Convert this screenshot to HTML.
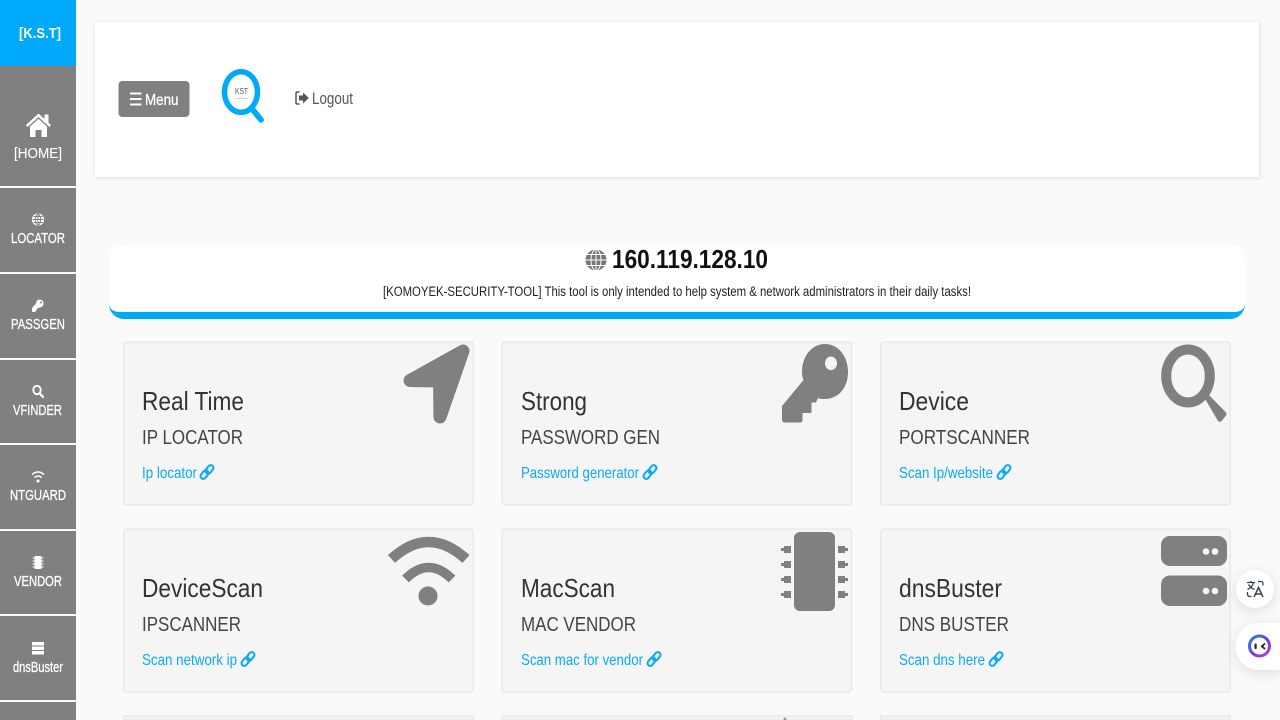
<!DOCTYPE html>
<html lang="en">
<head>
<meta charset="utf-8">
<title>[K.S.T]</title>
<style>
html,body{margin:0;padding:0;width:1280px;height:720px;overflow:hidden;background:#fafafa}
svg{display:block;position:absolute;left:0;top:0;filter:blur(.3px)}
text{font-family:"Liberation Sans",sans-serif}
.s{fill:#fff;font-size:15px;text-anchor:start;stroke:#fff;stroke-width:.3px}
.t{fill:#333;font-size:26px}
.u{fill:#444;font-size:20px}
.l{fill:#0aaaf8;font-size:16px}
.card{fill:#f5f5f5;stroke:#e9e9e9;stroke-width:1.5}
</style>
</head>
<body>
<svg width="1280" height="720" viewBox="0 0 1280 720" xmlns="http://www.w3.org/2000/svg">
<defs>
<filter id="sh" x="-5%" y="-20%" width="110%" height="140%"><feDropShadow dx="1" dy="1" stdDeviation="2" flood-color="#000" flood-opacity=".12"/></filter>
<filter id="sh2" x="-40%" y="-40%" width="180%" height="180%"><feDropShadow dx="0" dy="3" stdDeviation="6" flood-color="#000" flood-opacity=".12"/></filter>
<linearGradient id="rg" x1="0" y1="0" x2="1" y2="1"><stop offset="0" stop-color="#2b7bf0"/><stop offset=".55" stop-color="#6a3ce6"/><stop offset="1" stop-color="#c93ccf"/></linearGradient>
<symbol id="lnk" viewBox="0 0 14 16" overflow="visible">
<g fill="none" stroke="#0aaaf8" stroke-width="2.100">
<rect x="6.800" y="0.700" width="5.400" height="9.400" rx="2.700" transform="rotate(38 9.500 5.400)"/>
<rect x="1.800" y="5.900" width="5.400" height="9.400" rx="2.700" transform="rotate(38 4.500 10.600)"/>
</g>
</symbol>
</defs>

<rect width="1280" height="720" fill="#fafafa"/>

<!-- sidebar -->
<rect x="0" y="66" width="76" height="120" fill="#808080"/>
<rect x="0" y="0" width="76" height="66" fill="#00a9f9"/>
<rect x="0" y="188" width="76" height="84" fill="#808080"/>
<rect x="0" y="274" width="76" height="84" fill="#808080"/>
<rect x="0" y="360" width="76" height="83" fill="#808080"/>
<rect x="0" y="445" width="76" height="84" fill="#808080"/>
<rect x="0" y="531" width="76" height="83" fill="#808080"/>
<rect x="0" y="616" width="76" height="84" fill="#808080"/>
<rect x="0" y="702" width="76" height="18" fill="#808080"/>

<text x="19" y="38" fill="#fff" font-size="15" font-weight="bold" textLength="42" lengthAdjust="spacingAndGlyphs">[K.S.T]</text>

<!-- home icon -->
<path d="M26 125 38.500 113.500 44.500 119V114.500H48.500V122.800L51 125 49.500 127 38.500 117 27.500 127Z" fill="#fff"/>
<path d="M30 126.500 38.500 118.800 47 126.500V137H41.500V130H35.500V137H30Z" fill="#fff"/>
<text class="s" x="14" y="158" style="stroke-width:.1px" textLength="48" lengthAdjust="spacingAndGlyphs">[HOME]</text>

<!-- globe -->
<g fill="none" stroke="#fff" stroke-width="1.200"><circle cx="38" cy="219.500" r="5.500" fill="#fff"/><path stroke="#808080" stroke-width=".9" d="M32.500 219.500H43.500M33.500 216.500H42.500M33.500 222.500H42.500M38 214V225"/><ellipse cx="38" cy="219.500" rx="2.600" ry="5.500" stroke="#808080" stroke-width=".9"/></g>
<text class="s" x="11" y="243" font-size="14" textLength="54" lengthAdjust="spacingAndGlyphs">LOCATOR</text>

<!-- key -->
<path d="M32 311V308L36 303.500C36 301 38 299.500 40 299.500 42.200 299.500 43.500 301.500 43.500 303.500 43.500 306 41.500 307.500 39.500 307.500L37 308.500V310L35.500 310.500V312H32.500Z" fill="#fff"/>
<circle cx="41" cy="302.500" r="1" fill="#808080"/>
<text class="s" x="11" y="329" font-size="14" textLength="54" lengthAdjust="spacingAndGlyphs">PASSGEN</text>

<!-- search -->
<ellipse cx="37" cy="390" rx="3.700" ry="4.200" fill="none" stroke="#fff" stroke-width="1.900"/>
<path d="M39.800 393.500 43 397" stroke="#fff" stroke-width="2.200" stroke-linecap="round"/>
<text class="s" x="13" y="415" font-size="14" textLength="49" lengthAdjust="spacingAndGlyphs">VFINDER</text>

<!-- wifi -->
<path d="M32 474.500Q38 469.500 44 474.500M34.500 477.500Q38 474.500 41.500 477.500" fill="none" stroke="#fff" stroke-width="1.500"/>
<circle cx="38" cy="481" r="1.500" fill="#fff"/>
<text class="s" x="10" y="500" font-size="14" textLength="56" lengthAdjust="spacingAndGlyphs">NTGUARD</text>

<!-- chip -->
<rect x="34.500" y="556" width="7" height="13" rx="1" fill="#fff"/>
<path d="M32.500 558H43.500M32.500 561H43.500M32.500 564H43.500M32.500 567H43.500" stroke="#fff" stroke-width=".9"/>
<text class="s" x="14" y="586" font-size="14" textLength="48" lengthAdjust="spacingAndGlyphs">VENDOR</text>

<!-- server -->
<rect x="32" y="642" width="12" height="3.500" fill="#fff"/>
<rect x="32" y="646.500" width="12" height="3.500" fill="#fff"/>
<rect x="32" y="651" width="12" height="3.500" fill="#fff"/>
<text class="s" x="13" y="672" font-size="14" textLength="50" lengthAdjust="spacingAndGlyphs">dnsBuster</text>

<!-- header -->
<rect x="95" y="22" width="1164" height="155" fill="#fff" filter="url(#sh)"/>
<rect x="118.500" y="81" width="71" height="36" rx="4" fill="#808080"/>
<path d="M130 93.500H141.500M130 99H141.500M130 104.500H141.500" stroke="#fff" stroke-width="2"/>
<text x="145" y="105" fill="#fff" stroke="#fff" stroke-width=".3" font-size="16" textLength="33.500" lengthAdjust="spacingAndGlyphs">Menu</text>

<!-- logo -->
<ellipse cx="241" cy="92" rx="16.500" ry="20.300" fill="#fff" stroke="#00a9f9" stroke-width="5.500"/>
<path d="M253 110 261 119.800" stroke="#00a9f9" stroke-width="5.800" stroke-linecap="round"/>
<text x="235" y="94" fill="#555" font-size="8.500" textLength="13" lengthAdjust="spacingAndGlyphs">KST</text>
<path d="M235 98.500H248" stroke="#ccc" stroke-width=".8"/>

<!-- logout -->
<path d="M299.500 92H297Q296 92 296 93.500V102.500Q296 104 297 104H299.500" fill="none" stroke="#555" stroke-width="1.500"/>
<path d="M299 95.500H303V92.500L308.800 98 303 103.500V100.500H299Z" fill="#555"/>
<text x="312" y="104" fill="#555" font-size="16.500" textLength="41" lengthAdjust="spacingAndGlyphs">Logout</text>

<!-- banner -->
<rect x="109" y="245" width="1136" height="74" rx="15" fill="#00a9f9"/>
<path d="M124 245H1230Q1245 245 1245 260V305Q1243 312 1234 312H120Q111 312 109 305V260Q109 245 124 245Z" fill="#fff"/>
<circle cx="596" cy="260" r="10.500" fill="#777"/>
<path d="M585.500 260H606.500M587 254.500H605M587 265.500H605M596 249.500V270.500" stroke="#fff" stroke-width="1"/>
<ellipse cx="596" cy="260" rx="5" ry="10.500" fill="none" stroke="#fff" stroke-width="1"/>
<text x="612" y="268" fill="#111" font-size="26" font-weight="bold" textLength="156" lengthAdjust="spacingAndGlyphs">160.119.128.10</text>
<text x="383" y="296" fill="#222" font-size="13.500" textLength="588" lengthAdjust="spacingAndGlyphs">[KOMOYEK-SECURITY-TOOL] This tool is only intended to help system &amp; network administrators in their daily tasks!</text>

<!-- cards row 1 -->
<rect class="card" x="123.750" y="342" width="349.500" height="163" rx="3"/>
<rect class="card" x="502.250" y="342" width="349.500" height="163" rx="3"/>
<rect class="card" x="880.750" y="342" width="349.500" height="163" rx="3"/>
<!-- cards row 2 -->
<rect class="card" x="123.750" y="529" width="349.500" height="163" rx="3"/>
<rect class="card" x="502.250" y="529" width="349.500" height="163" rx="3"/>
<rect class="card" x="880.750" y="529" width="349.500" height="163" rx="3"/>
<!-- cards row 3 -->
<rect class="card" x="123.750" y="716" width="349.500" height="4" />
<rect class="card" x="502.250" y="716" width="349.500" height="4" />
<rect class="card" x="880.750" y="716" width="349.500" height="4" />
<circle cx="785" cy="719" r="1.500" fill="#999"/>

<!-- text row 1 -->
<text class="t" x="142" y="410" textLength="102" lengthAdjust="spacingAndGlyphs">Real Time</text>
<text class="u" x="142" y="444" textLength="101" lengthAdjust="spacingAndGlyphs">IP LOCATOR</text>
<text class="l" x="142" y="478" textLength="55" lengthAdjust="spacingAndGlyphs">Ip locator</text>
<use href="#lnk" x="200" y="464" width="14" height="16"/>

<text class="t" x="521" y="410" textLength="66" lengthAdjust="spacingAndGlyphs">Strong</text>
<text class="u" x="521" y="444" textLength="139" lengthAdjust="spacingAndGlyphs">PASSWORD GEN</text>
<text class="l" x="521" y="478" textLength="118" lengthAdjust="spacingAndGlyphs">Password generator</text>
<use href="#lnk" x="643" y="464" width="14" height="16"/>

<text class="t" x="899" y="410" textLength="70" lengthAdjust="spacingAndGlyphs">Device</text>
<text class="u" x="899" y="444" textLength="131" lengthAdjust="spacingAndGlyphs">PORTSCANNER</text>
<text class="l" x="899" y="478" textLength="94" lengthAdjust="spacingAndGlyphs">Scan Ip/website</text>
<use href="#lnk" x="997" y="464" width="14" height="16"/>

<!-- text row 2 -->
<text class="t" x="142" y="597" textLength="121" lengthAdjust="spacingAndGlyphs">DeviceScan</text>
<text class="u" x="142" y="631" textLength="99" lengthAdjust="spacingAndGlyphs">IPSCANNER</text>
<text class="l" x="142" y="665" textLength="95" lengthAdjust="spacingAndGlyphs">Scan network ip</text>
<use href="#lnk" x="241" y="651" width="14" height="16"/>

<text class="t" x="521" y="597" textLength="94" lengthAdjust="spacingAndGlyphs">MacScan</text>
<text class="u" x="521" y="631" textLength="115" lengthAdjust="spacingAndGlyphs">MAC VENDOR</text>
<text class="l" x="521" y="665" textLength="122" lengthAdjust="spacingAndGlyphs">Scan mac for vendor</text>
<use href="#lnk" x="647" y="651" width="14" height="16"/>

<text class="t" x="899" y="597" textLength="103" lengthAdjust="spacingAndGlyphs">dnsBuster</text>
<text class="u" x="899" y="631" textLength="110" lengthAdjust="spacingAndGlyphs">DNS BUSTER</text>
<text class="l" x="899" y="665" textLength="86" lengthAdjust="spacingAndGlyphs">Scan dns here</text>
<use href="#lnk" x="989" y="651" width="14" height="16"/>

<!-- big icons -->
<!-- location arrow -->
<path d="M463 351 410 380.500 439.500 381 440 417Z" fill="#808080" stroke="#808080" stroke-width="13" stroke-linejoin="round"/>

<!-- key -->
<path fill-rule="evenodd" fill="#808080" d="M825 344C838 344 848 356 848 372 848 388 838 399 825 399 822 399 820 399 818 398L816 402.500H811.500V411.500Q811.500 413 810 413H802.500V420Q802.500 422.500 800 422.500H785Q782 422.500 782 419.500V406L803.500 380C802.500 377 802 375 802 372 802 356 812 344 825 344ZM831 356.500A6 6.800 0 1 0 831 370.100 6 6.800 0 1 0 831 356.500Z"/>

<!-- search -->
<ellipse cx="1188" cy="376" rx="21.800" ry="26.500" fill="none" stroke="#808080" stroke-width="10"/>
<path d="M1204 397 1207.500 393.500 1226 412.500Q1227 414 1226 415.500L1222 420.500Q1220 423 1218 421Z" fill="#808080"/>

<!-- wifi -->
<path d="M391.500 559Q428.500 525 466 559" fill="none" stroke="#808080" stroke-width="10.500" stroke-linejoin="round"/>
<path d="M405.500 579Q428.500 556 452 579" fill="none" stroke="#808080" stroke-width="9.500"/>
<circle cx="428" cy="596" r="9.500" fill="#808080"/>

<!-- chip -->
<rect x="794" y="532" width="41" height="79" rx="6" fill="#808080"/>
<g fill="#808080">
<rect x="784" y="546" width="7" height="7"/><rect x="781" y="548" width="3" height="3"/>
<rect x="784" y="561" width="7" height="7"/><rect x="781" y="563" width="3" height="3"/>
<rect x="784" y="576" width="7" height="7"/><rect x="781" y="578" width="3" height="3"/>
<rect x="784" y="591" width="7" height="7"/><rect x="781" y="593" width="3" height="3"/>
<rect x="838" y="546" width="7" height="7"/><rect x="845" y="548" width="3" height="3"/>
<rect x="838" y="561" width="7" height="7"/><rect x="845" y="563" width="3" height="3"/>
<rect x="838" y="576" width="7" height="7"/><rect x="845" y="578" width="3" height="3"/>
<rect x="838" y="591" width="7" height="7"/><rect x="845" y="593" width="3" height="3"/>
</g>

<!-- server -->
<rect x="1161" y="536" width="66" height="30" rx="9" fill="#808080"/>
<rect x="1161" y="575.500" width="66" height="30.500" rx="9" fill="#808080"/>
<g fill="#f5f5f5">
<circle cx="1206" cy="551.500" r="3.300"/><circle cx="1215" cy="551.500" r="3.300"/>
<circle cx="1206" cy="591" r="3.300"/><circle cx="1215" cy="591" r="3.300"/>
</g>

<!-- floating buttons -->
<circle cx="1255" cy="589" r="19" fill="#fff" filter="url(#sh2)"/>
<g fill="none" stroke="#3a4250" stroke-width="1.300">
<path d="M1247 582.500H1255M1251 581V582.500M1253.500 582.500Q1252.500 587 1247.500 589.500M1248.500 584.500Q1250.500 588 1254.500 589.500"/>
<path d="M1258 581.500H1261Q1263 581.500 1263 584V585.500M1247.500 592V594Q1247.500 596.500 1250 596.500H1251.500"/>
<path d="M1254 597 1258.500 587.500 1263 597M1255.500 594H1261.500" stroke-width="1.500"/>
</g>
<path d="M1280 623H1259A23.500 23.500 0 0 0 1259 670H1280Z" fill="#fff" filter="url(#sh2)"/>
<circle cx="1259.500" cy="646" r="10" fill="#fff" stroke="url(#rg)" stroke-width="3"/>
<rect x="1254.500" y="643.500" width="2.200" height="5.500" rx="1" fill="#222"/>
<path d="M1265 643.500 1261.800 646.300 1265 649" fill="none" stroke="#222" stroke-width="1.800"/>

</svg>
</body>
</html>
